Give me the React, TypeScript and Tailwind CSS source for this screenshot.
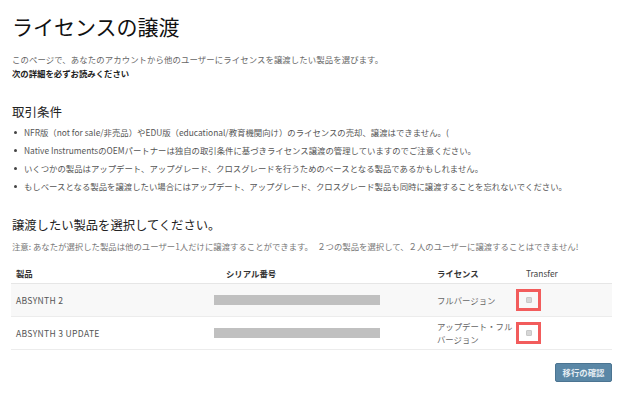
import React from 'react';

const products = [
  { name: 'ABSYNTH 2', license: 'フルバージョン', shade: true },
  { name: 'ABSYNTH 3 UPDATE', license: 'アップデート・フルバージョン', shade: false },
];

const terms = [
  'NFR版（not for sale/非売品）やEDU版（educational/教育機関向け）のライセンスの売却、譲渡はできません。(',
  'Native InstrumentsのOEMパートナーは独自の取引条件に基づきライセンス譲渡の管理していますのでご注意ください。',
  'いくつかの製品はアップデート、アップグレード、クロスグレードを行うためのベースとなる製品であるかもしれません。',
  'もしベースとなる製品を譲渡したい場合にはアップデート、アップグレード、クロスグレード製品も同時に譲渡することを忘れないでください。',
];

export default function App() {
  return (
    <div
      className="w-[630px] h-[397px] bg-white overflow-hidden px-[12px] pt-[16px]"
      style={{ fontFamily: '"Noto Sans CJK JP", "Noto Sans", sans-serif' }}
    >
      <h1 className="text-[21px] leading-[21px] text-[#111] font-normal">ライセンスの譲渡</h1>

      <p className="mt-[15px] text-[8.4px] leading-[14px] text-[#666] tracking-[0.1px]">
        このページで、あなたのアカウントから他のユーザーにライセンスを譲渡したい製品を選びます。
      </p>
      <p className="text-[8.4px] leading-[14px] text-[#222] font-bold">次の詳細を必ずお読みください</p>

      <h2 className="mt-[25px] text-[12.5px] leading-[13px] text-[#222] font-normal">取引条件</h2>

      <ul className="mt-[5px]">
        {terms.map((t) => (
          <li key={t} className="flex items-center h-[18px] text-[8.4px] text-[#555]">
            <span className="w-[3px] h-[3px] rounded-full bg-[#444] ml-[2px] mr-[7px] shrink-0" />
            <span className="whitespace-nowrap">{t}</span>
          </li>
        ))}
      </ul>

      <h2 className="mt-[24px] text-[12.3px] leading-[13px] text-[#222] font-normal">
        譲渡したい製品を選択してください。
      </h2>
      <p className="mt-[7px] text-[8.4px] leading-[14px] text-[#777] whitespace-nowrap">
        注意: あなたが選択した製品は他のユーザー1人だけに譲渡することができます。　２つの製品を選択して、２人のユーザーに譲渡することはできません!
      </p>

      <div className="mt-[10px] -ml-[1px] w-[601px]">
        <div className="grid grid-cols-[198px_223px_79px_1fr] h-[21px] items-center border-b border-[#e6e6e6] text-[8.4px] text-[#333]">
          <div className="pl-[5px] font-bold">製品</div>
          <div className="pl-[17px] font-bold">シリアル番号</div>
          <div className="pl-[5px] font-bold">ライセンス</div>
          <div className="pl-[15px] text-[#444]">Transfer</div>
        </div>
        {products.map((p) => (
          <div
            key={p.name}
            className={`grid grid-cols-[198px_223px_79px_1fr] h-[33px] items-center border-b border-[#ececec] ${
              p.shade ? 'bg-[#f8f8f8]' : 'bg-white'
            }`}
          >
            <div className="pl-[5px] text-[8.6px] tracking-[0.3px] text-[#555]">{p.name}</div>
            <div className="pl-[5px]">
              <div className="w-[166px] h-[10px] bg-[#c0c0c0]" />
            </div>
            <div className="pl-[5px] text-[8.4px] leading-[12.6px] text-[#666]">
              <span className="block w-[78px]">{p.license}</span>
            </div>
            <div className="pl-[5px]">
              <div className="w-[25px] h-[22px] border-[3px] border-[#f25c5c] flex items-center justify-center">
                <span className="w-[6px] h-[6px] rounded-[1px] bg-[#d6d6d6] border border-[#c8c8c8]" />
              </div>
            </div>
          </div>
        ))}
      </div>

      <div className="flex justify-end w-[600px] mt-[13px]">
        <button className="w-[57px] h-[19px] rounded-[2px] bg-[#5a87a6] border border-[#4b7491] text-[8.4px] font-bold text-[#e4ecf2] flex items-center justify-center">
          移行の確認
        </button>
      </div>
    </div>
  );
}
